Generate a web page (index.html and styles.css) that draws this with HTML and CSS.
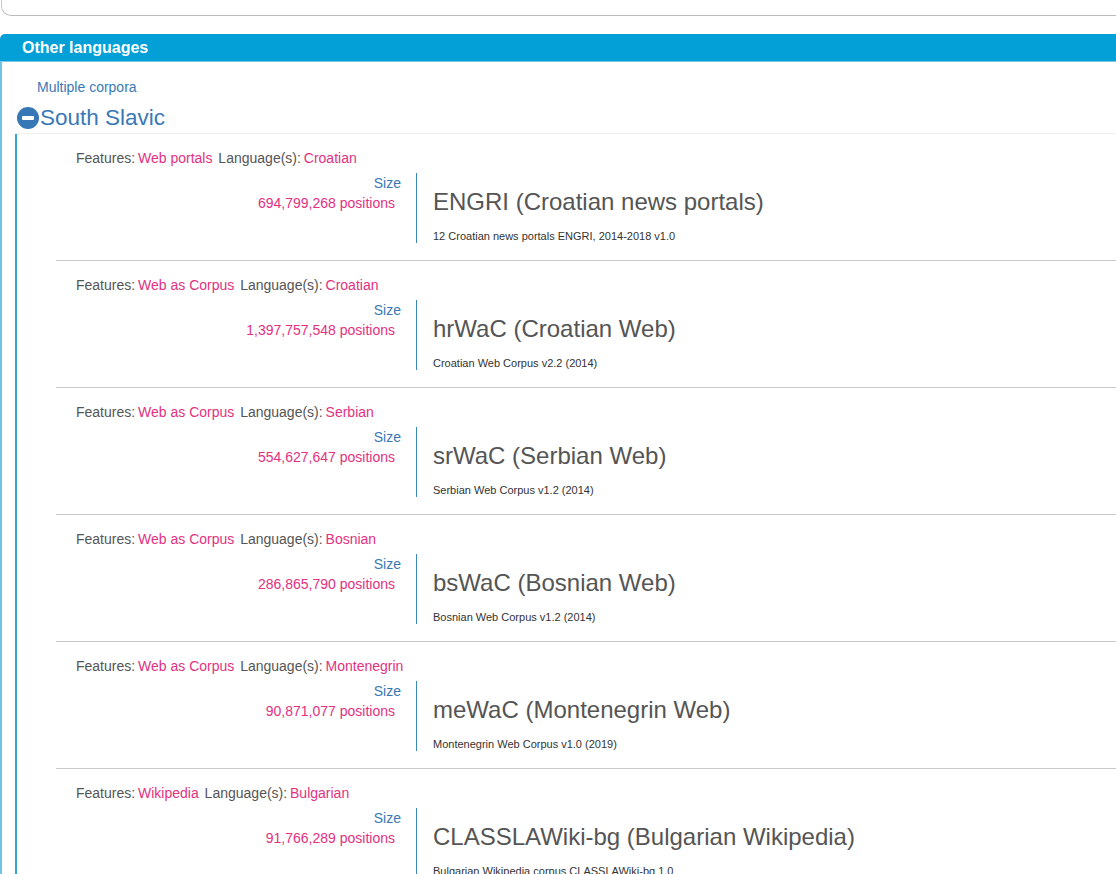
FILE: index.html
```html
<!DOCTYPE html>
<html lang="en">
<head>
<meta charset="utf-8">
<title>Other languages</title>
<link rel="stylesheet" href="styles.css">
</head>
<body>
<div class="topbox"></div>
<section class="panel">
  <div class="panel-head">Other languages</div>
  <div class="panel-body">
    <a class="multi" href="#">Multiple corpora</a>
    <div class="group">
      <div class="group-head">
        <svg class="toggle" width="22" height="22" viewBox="0 0 22 22"><circle cx="11" cy="11" r="11" fill="#3777b6"/><rect x="5" y="9" width="12" height="4" rx="1" fill="#fff"/></svg>
        <span>South Slavic</span>
      </div>
      <div class="group-body">
        <div class="entry">
          <div class="meta">Features: <span class="hl">Web portals</span> Language(s): <span class="hl">Croatian</span></div>
          <div class="details">
            <div class="size"><div class="size-label">Size</div><div class="size-val">694,799,268 positions</div></div>
            <div class="info"><div class="title">ENGRI (Croatian news portals)</div><div class="desc">12 Croatian news portals ENGRI, 2014-2018 v1.0</div></div>
          </div>
        </div>
        <div class="entry">
          <div class="meta">Features: <span class="hl">Web as Corpus</span> Language(s): <span class="hl">Croatian</span></div>
          <div class="details">
            <div class="size"><div class="size-label">Size</div><div class="size-val">1,397,757,548 positions</div></div>
            <div class="info"><div class="title">hrWaC (Croatian Web)</div><div class="desc">Croatian Web Corpus v2.2 (2014)</div></div>
          </div>
        </div>
        <div class="entry">
          <div class="meta">Features: <span class="hl">Web as Corpus</span> Language(s): <span class="hl">Serbian</span></div>
          <div class="details">
            <div class="size"><div class="size-label">Size</div><div class="size-val">554,627,647 positions</div></div>
            <div class="info"><div class="title">srWaC (Serbian Web)</div><div class="desc">Serbian Web Corpus v1.2 (2014)</div></div>
          </div>
        </div>
        <div class="entry">
          <div class="meta">Features: <span class="hl">Web as Corpus</span> Language(s): <span class="hl">Bosnian</span></div>
          <div class="details">
            <div class="size"><div class="size-label">Size</div><div class="size-val">286,865,790 positions</div></div>
            <div class="info"><div class="title">bsWaC (Bosnian Web)</div><div class="desc">Bosnian Web Corpus v1.2 (2014)</div></div>
          </div>
        </div>
        <div class="entry">
          <div class="meta">Features: <span class="hl">Web as Corpus</span> Language(s): <span class="hl">Montenegrin</span></div>
          <div class="details">
            <div class="size"><div class="size-label">Size</div><div class="size-val">90,871,077 positions</div></div>
            <div class="info"><div class="title">meWaC (Montenegrin Web)</div><div class="desc">Montenegrin Web Corpus v1.0 (2019)</div></div>
          </div>
        </div>
        <div class="entry">
          <div class="meta">Features: <span class="hl">Wikipedia</span> Language(s): <span class="hl">Bulgarian</span></div>
          <div class="details">
            <div class="size"><div class="size-label">Size</div><div class="size-val">91,766,289 positions</div></div>
            <div class="info"><div class="title">CLASSLAWiki-bg (Bulgarian Wikipedia)</div><div class="desc">Bulgarian Wikipedia corpus CLASSLAWiki-bg 1.0</div></div>
          </div>
        </div>
      </div>
    </div>
  </div>
</section>
</body>
</html>
```
FILE: styles.css
```css
html, body {
  margin: 0;
  padding: 0;
  background: #fff;
  overflow: hidden;
}
body {
  font-family: "Liberation Sans", Arial, sans-serif;
  font-size: 14px;
  color: #555;
}
.topbox {
  height: 15px;
  margin-left: 1px;
  border-left: 1px solid #c8c8c8;
  border-bottom: 1px solid #bbb;
  border-bottom-left-radius: 10px;
}
.panel {
  margin-top: 18px;
}
.panel-head {
  height: 28px;
  line-height: 27px;
  padding-left: 22px;
  background: #02a0d7;
  color: #fff;
  font-size: 16px;
  font-weight: bold;
  border-top-left-radius: 5px;
  border-bottom: 1px solid #7cc7e6;
  box-sizing: border-box;
}
.panel-body {
  border-left: 2px solid #6ec3e6;
  padding-top: 15px;
}
.multi {
  display: block;
  margin-left: 35px;
  line-height: 20px;
  color: #3a79b5;
  text-decoration: none;
}
.group {
  margin-left: 13px;
  margin-top: 6px;
}
.group-head {
  display: flex;
  align-items: center;
  gap: 1px;
  height: 30px;
  padding-left: 2px;
  font-size: 22.5px;
  color: #3a79b5;
  border-bottom: 1px solid #f0f0f0;
}
.toggle {
  flex: none;
}
.group-body {
  border-left: 2px solid #35a2d9;
  padding-top: 13px;
}
.entry {
  margin-left: 39px;
  border-bottom: 1px solid #c8c8c8;
  padding-bottom: 17px;
  margin-bottom: 13px;
}
.meta {
  padding-left: 20px;
  line-height: 22px;
  color: #555;
}
.hl {
  color: #e3317f;
  margin-left: -1px;
  margin-right: 2px;
}
.details {
  display: flex;
  margin-top: 4px;
}
.size {
  width: 345px;
  flex: none;
  padding-right: 15px;
  text-align: right;
  line-height: 20px;
}
.size-label {
  color: #3a79b5;
}
.size-val {
  color: #e3317f;
  padding-right: 6px;
}
.info {
  border-left: 1px solid #3b88b8;
  padding-left: 16px;
  height: 70px;
  box-sizing: border-box;
  padding-top: 16px;
}
.title {
  font-size: 24px;
  line-height: 26px;
  color: #555;
}
.desc {
  font-size: 11px;
  line-height: 14px;
  margin-top: 14px;
  color: #333;
}
```
